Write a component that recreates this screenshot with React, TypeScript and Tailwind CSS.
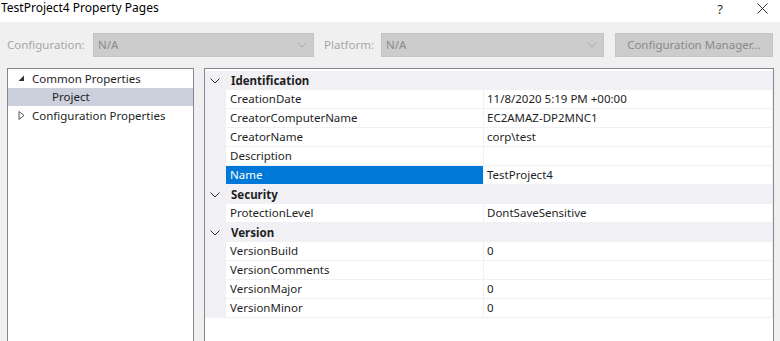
import React from "react";

type Row = { name: string; value: string; selected?: boolean };
type Group = { title: string; rows: Row[] };

const GROUPS: Group[] = [
  {
    title: "Identification",
    rows: [
      { name: "CreationDate", value: "11/8/2020 5:19 PM +00:00" },
      { name: "CreatorComputerName", value: "EC2AMAZ-DP2MNC1" },
      { name: "CreatorName", value: "corp\\test" },
      { name: "Description", value: "" },
      { name: "Name", value: "TestProject4", selected: true },
    ],
  },
  {
    title: "Security",
    rows: [{ name: "ProtectionLevel", value: "DontSaveSensitive" }],
  },
  {
    title: "Version",
    rows: [
      { name: "VersionBuild", value: "0" },
      { name: "VersionComments", value: "" },
      { name: "VersionMajor", value: "0" },
      { name: "VersionMinor", value: "0" },
    ],
  },
];

function Chevron({ className }: { className?: string }) {
  return (
    <svg width="10" height="6" viewBox="0 0 10 6" className={className}>
      <polyline points="0.5,0.5 5,5 9.5,0.5" fill="none" stroke="currentColor" strokeWidth="1" />
    </svg>
  );
}

function Dropdown({ value, width }: { value: string; width: string }) {
  return (
    <div className={`${width} h-[24px] bg-[#cccccc] border border-[#c4c4c4] flex items-center pl-[4px] pr-[6px] text-[#8a8a8a]`}>
      <span className="flex-1">{value}</span>
      <Chevron className="text-[#a8a8a8]" />
    </div>
  );
}

export default function App() {
  return (
    <div
      className="w-[780px] h-[341px] overflow-hidden flex flex-col text-[11.5px] text-[#1e1e1e]"
      style={{ fontFamily: '"Noto Sans", "Open Sans", sans-serif' }}
    >
      {/* title bar */}
      <div className="h-[22px] bg-white flex items-start shrink-0">
        <span className="pl-[1px] pt-[1px] leading-[14px] text-[12px] text-black">TestProject4 Property Pages</span>
        <span className="ml-auto mr-[34px] text-[13px] leading-[18px] text-[#333]">?</span>
        <svg width="11" height="11" viewBox="0 0 11 11" className="mr-[12px] mt-[3px] text-[#333]">
          <path d="M0.5 0.5 L10.5 10.5 M10.5 0.5 L0.5 10.5" stroke="currentColor" strokeWidth="1" />
        </svg>
      </div>

      <div className="flex-1 bg-[#f0f0f0] flex flex-col">
        {/* configuration row */}
        <div className="flex items-center mt-[11px] h-[24px]">
          <span className="ml-[7px] w-[86px] text-[#a6a6a6]">Configuration:</span>
          <Dropdown value="N/A" width="w-[221px]" />
          <span className="ml-[10px] w-[57px] text-[#a6a6a6]">Platform:</span>
          <Dropdown value="N/A" width="w-[223px]" />
          <div className="ml-[11px] w-[158px] h-[24px] bg-[#cccccc] border border-[#c4c4c4] flex items-center justify-center text-[#8a8a8a]">
            Configuration Manager...
          </div>
        </div>

        {/* panels */}
        <div className="flex flex-1 mt-[11px]">
          {/* tree */}
          <div className="ml-[7px] w-[187px] bg-white border border-[#828790] border-b-0 flex flex-col">
            <div className="h-[19px] flex items-center">
              <svg width="7" height="7" viewBox="0 0 7 7" className="ml-[10px] mr-[7px]">
                <polygon points="6,0.5 6,6 0.5,6" fill="#333" />
              </svg>
              <span>Common Properties</span>
            </div>
            <div className="h-[18px] flex items-center bg-[#ccd0dc] pl-[44px]">Project</div>
            <div className="h-[19px] flex items-center">
              <svg width="7" height="9" viewBox="0 0 7 9" className="ml-[10px] mr-[7px]">
                <polygon points="1,0.5 6,4.5 1,8.5" fill="none" stroke="#555" strokeWidth="1" />
              </svg>
              <span>Configuration Properties</span>
            </div>
          </div>

          {/* property grid */}
          <div className="ml-[10px] w-[570px] bg-white border border-[#828790] border-b-0 pt-[2px] flex flex-col">
            {GROUPS.map((g) => (
              <div key={g.title} className="flex flex-col">
                <div className="h-[19px] bg-[#f0f0f5] flex items-center">
                  <Chevron className="ml-[5px] mr-[11px] text-[#333]" />
                  <span className="font-bold">{g.title}</span>
                </div>
                {g.rows.map((r) => (
                  <div key={r.name} className="h-[19px] flex bg-[#f0f0f5]">
                    <div className="w-[21px]" />
                    <div
                      className={`w-[257px] flex items-center pl-[4px] border-b border-[#f0f0f5] ${
                        r.selected ? "bg-[#0078d7] text-white" : "bg-white"
                      }`}
                    >
                      {r.name}
                    </div>
                    <div className="w-px" />
                    <div className="flex-1 flex items-center pl-[3px] bg-white border-b border-[#f0f0f5] mr-[1px]">
                      {r.value}
                    </div>
                  </div>
                ))}
              </div>
            ))}
          </div>
        </div>
      </div>
    </div>
  );
}
